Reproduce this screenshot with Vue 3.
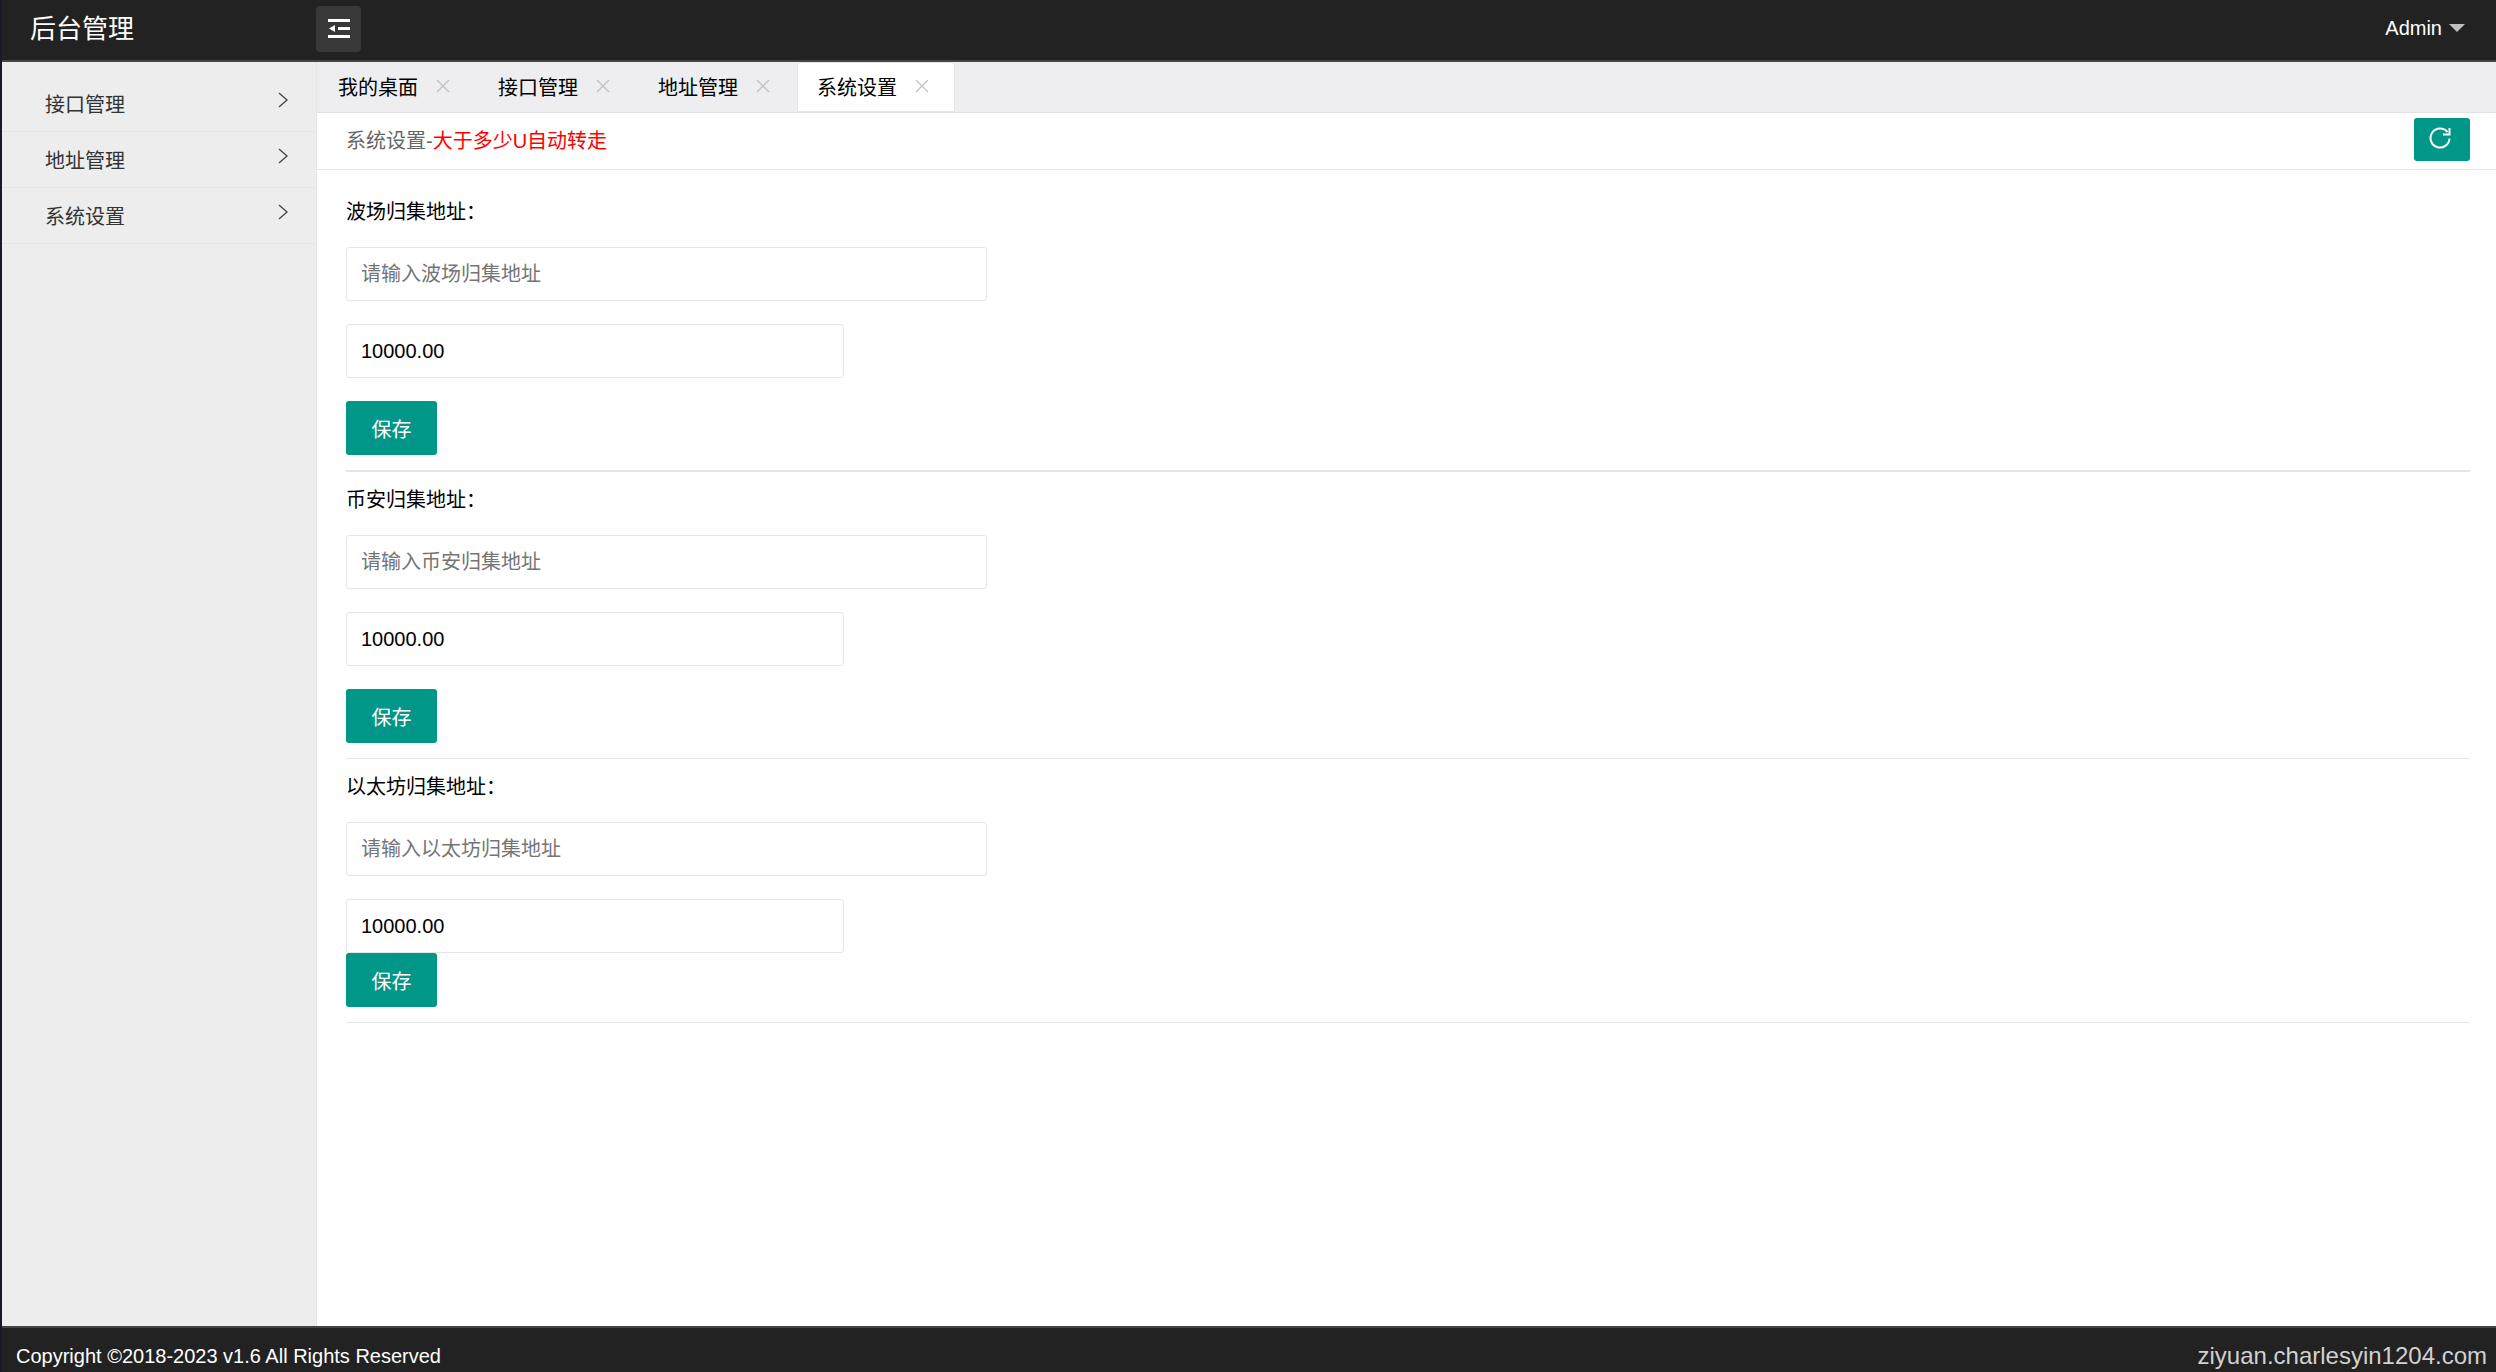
<script setup>
import { ref } from 'vue'

const menu = ['接口管理', '地址管理', '系统设置']
const tabs = ['我的桌面', '接口管理', '地址管理', '系统设置']
const activeTab = ref(3)

const sections = ref([
  { id: 'tron', name: '波场归集地址', address: '', amount: '10000.00' },
  { id: 'bsc', name: '币安归集地址', address: '', amount: '10000.00' },
  { id: 'eth', name: '以太坊归集地址', address: '', amount: '10000.00' },
])
</script>

<template>
  <div class="page">
    <header class="header">
      <a class="logo" href="#">后台管理</a>
      <button class="toggle" type="button" aria-label="收起菜单">
        <svg width="24" height="22" viewBox="0 0 24 22" fill="#fff">
          <rect x="1" y="1" width="22" height="3" />
          <rect x="11" y="9" width="12" height="3" />
          <rect x="1" y="17" width="22" height="3" />
          <path d="M2 10.500L8 7V14Z" />
        </svg>
      </button>
      <a class="user" href="#">Admin<span class="caret"></span></a>
    </header>

    <div class="body">
      <nav class="sidebar">
        <a v-for="item in menu" :key="item" class="menu-item" href="#">
          {{ item }}
          <svg class="chevron" width="11" height="16" viewBox="0 0 11 16" fill="none" stroke="#444" stroke-width="1.300">
            <path d="M1 1L9 8L1 15" />
          </svg>
        </a>
      </nav>

      <main class="main">
        <div class="tabs">
          <div v-for="(tab, i) in tabs" :key="tab" class="tab" :class="{ active: i === activeTab }">
            <a class="tab-name" href="#" @click.prevent="activeTab = i">{{ tab }}</a>
            <button class="close" type="button" aria-label="关闭">
              <svg width="14" height="14" viewBox="0 0 14 14" fill="none" stroke="#c2c2c2" stroke-width="1.400">
                <path d="M1 1L13 13M13 1L1 13" />
              </svg>
            </button>
          </div>
        </div>

        <div class="crumbs">
          <span>系统设置-<span class="hint">大于多少U自动转走</span></span>
          <button class="refresh" type="button" aria-label="刷新">
            <svg width="22" height="22" viewBox="0 0 22 22" fill="none" stroke="#fff" stroke-width="2">
              <path d="M20.500 11.500A9.500 9.500 0 1 1 18.500 5.200" />
              <path d="M20.500 1V7.500H14" />
            </svg>
          </button>
        </div>

        <form class="content" @submit.prevent>
          <section v-for="s in sections" :key="s.id" class="group" :class="s.id">
            <label class="label" :for="s.id">{{ s.name }}：</label>
            <input :id="s.id" v-model="s.address" class="field address" type="text" :placeholder="'请输入' + s.name" />
            <input v-model="s.amount" class="field amount" type="text" aria-label="金额" />
            <button class="save" type="button">保存</button>
          </section>
        </form>
      </main>
    </div>

    <footer class="footer">
      <span>Copyright ©2018-2023 v1.6 All Rights Reserved</span>
      <span class="site">ziyuan.charlesyin1204.com</span>
    </footer>
  </div>
</template>

<style>
body {
  margin: 0;
}
</style>

<style scoped>
.page {
  display: flex;
  flex-direction: column;
  box-sizing: border-box;
  min-height: 100vh;
  border-left: 2px solid #1a1829;
  background: #fff;
  color: #000;
  font-family: "Liberation Sans", "Noto Sans CJK SC", sans-serif;
  font-size: 20px;
}

.page * {
  box-sizing: border-box;
}

a {
  color: inherit;
  text-decoration: none;
}

button,
input {
  margin: 0;
  font: inherit;
}

button {
  display: flex;
  align-items: center;
  justify-content: center;
  padding: 0;
  border: 0;
}

.header {
  display: flex;
  align-items: center;
  height: 62px;
  padding: 0 31px 4px 28px;
  border-bottom: 2px solid #474445;
  background: #222;
  color: #fff;
}

.logo {
  width: 286px;
  padding-bottom: 4px;
  font-size: 26px;
}

.toggle {
  width: 45px;
  height: 46px;
  margin-top: 2px;
  border-radius: 4px;
  background: #383838;
}

.user {
  display: flex;
  align-items: center;
  gap: 7px;
  margin-left: auto;
}

.caret {
  border: 8px solid transparent;
  border-top-color: #c2bfbf;
  border-bottom: 0;
}

.body {
  display: flex;
  flex: 1;
}

.sidebar {
  width: 315px;
  flex: none;
  padding-top: 14px;
  border-right: 1px solid #e5e5e5;
  background: #ededed;
}

.menu-item {
  display: flex;
  align-items: center;
  justify-content: space-between;
  height: 56px;
  padding: 0 27px 0 43px;
  border-bottom: 1px solid #e5e5e5;
  color: #333;
}

.chevron {
  margin-bottom: 8px;
}

.main {
  flex: 1;
}

.tabs {
  display: flex;
  height: 51px;
  border-bottom: 1px solid #e2e2e2;
  background: #eeeef0;
}

.tab {
  display: flex;
  align-items: center;
  gap: 18px;
  width: 160px;
  height: 50px;
  padding: 0 0 2px 21px;
}

.tab.active {
  width: 158px;
  border: 1px solid #e6e6e6;
  border-radius: 3px 3px 0 0;
  padding-left: 19px;
  background: #fff;
}

.close {
  background: none;
}

.crumbs {
  display: flex;
  align-items: center;
  justify-content: space-between;
  height: 57px;
  padding: 0 26px 4px 29px;
  border-bottom: 1px solid #e5e5e5;
  color: #666;
}

.hint {
  color: #f00;
}

.refresh {
  width: 56px;
  height: 43px;
  padding: 0 4px 2px 0;
  border-radius: 3px;
  background: #009688;
}

.content {
  padding: 14px 26px 14px 29px;
}

.group {
  display: flex;
  flex-direction: column;
  align-items: flex-start;
  padding-bottom: 15px;
  border-bottom: 1px solid #e6e6e6;
}

.group.tron {
  border-bottom-width: 2px;
}

.label {
  margin-bottom: 7px;
  line-height: 56px;
}

.field {
  height: 54px;
  margin-bottom: 23px;
  padding: 0 14px;
  border: 1px solid #e6e6e6;
  border-radius: 3px;
  outline: none;
  background: #fff;
  color: #000;
}

.field::placeholder {
  color: #757575;
  opacity: 1;
}

.address {
  width: 641px;
}

.amount {
  width: 498px;
}

.eth .amount {
  margin-bottom: 0;
}

.save {
  width: 91px;
  height: 54px;
  border-radius: 3px;
  background: #009688;
  color: #fff;
}

.footer {
  display: flex;
  align-items: center;
  justify-content: space-between;
  height: 46px;
  padding: 12px 9px 0 14px;
  border-top: 2px solid #444;
  background: #222;
  color: #fff;
}

.site {
  color: #d2d1cf;
  font-size: 24px;
}
</style>
